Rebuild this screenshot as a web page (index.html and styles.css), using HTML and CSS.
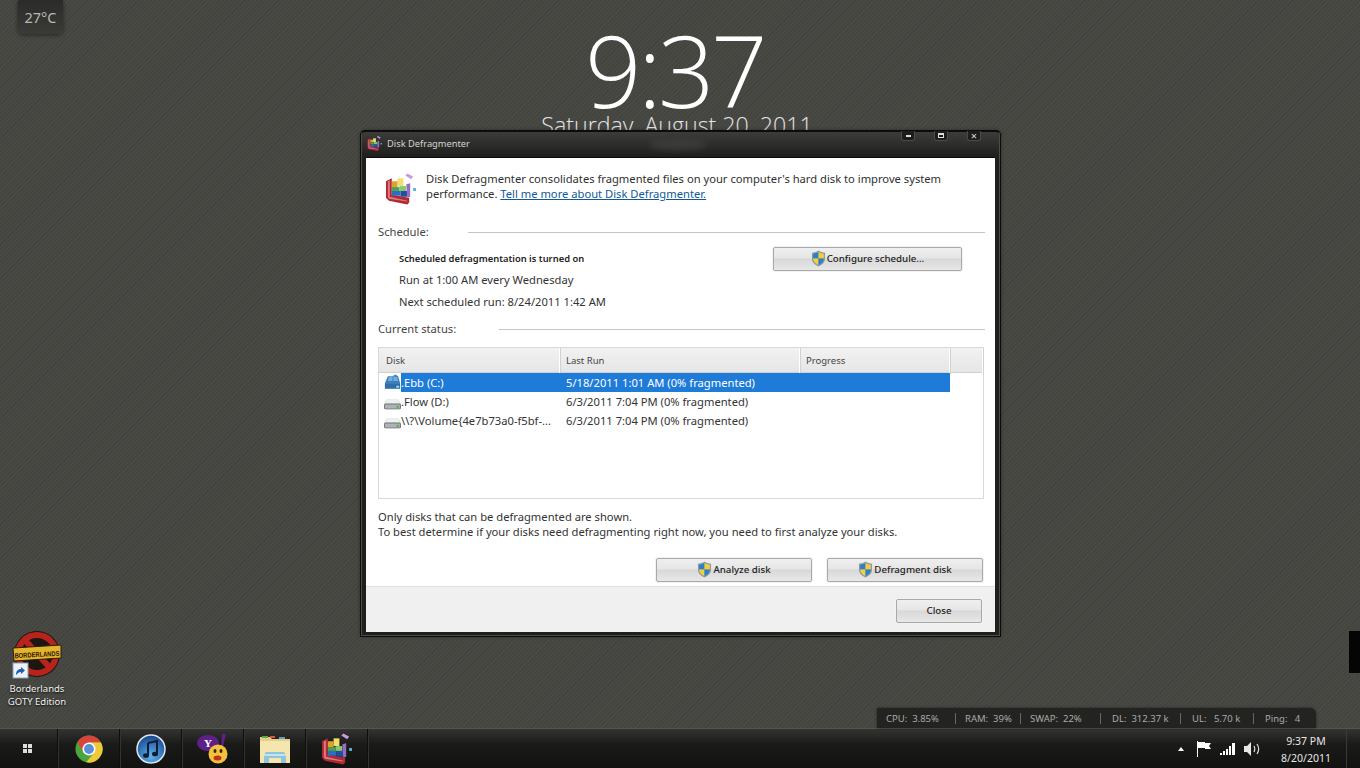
FILE: index.html
```html
<!DOCTYPE html>
<html lang="en">
<head>
<meta charset="utf-8">
<title>Disk Defragmenter</title>
<link rel="stylesheet" href="styles.css">
</head>
<body>
<svg class="defs" width="0" height="0">
  <defs>
    <symbol id="shield" viewBox="0 0 16 18">
      <path d="M8 .5C6 2 3.500 2.800 1 2.800v6C1 13 4 16 8 17.500c4-1.500 7-4.500 7-8.700v-6C12.500 2.800 10 2 8 .5z" fill="#8a9aa8"/>
      <path d="M8 2v7H2.300V3.800C4.300 3.700 6.300 3.100 8 2z" fill="#2f7fc4"/>
      <path d="M8 2c1.700 1.100 3.700 1.700 5.700 1.800V9H8z" fill="#f2cf3c"/>
      <path d="M2.300 9H8v7C4.800 14.800 2.500 12.300 2.300 9z" fill="#f2cf3c"/>
      <path d="M8 9h5.700c-.2 3.300-2.500 5.800-5.700 7z" fill="#2f7fc4"/>
    </symbol>
    <symbol id="defrag" viewBox="0 0 32 32">
      <path d="M1 8l6-3v17l18 3v5l-2 2L4 28l-3-3z" fill="#b02a34"/>
      <path d="M3 8l2-1v17l18 4v1L4 26l-1-2z" fill="#e07a80"/>
      <rect x="7" y="8" width="6" height="6" fill="#e2a02e"/>
      <rect x="13" y="5" width="6" height="8" fill="#ece070"/>
      <rect x="7" y="14" width="8" height="4" fill="#4aa448"/>
      <rect x="15" y="13" width="7" height="5" fill="#86c86c"/>
      <rect x="7" y="18" width="9" height="5" fill="#2f6cc2"/>
      <rect x="16" y="18" width="7" height="6" fill="#234f9e"/>
      <path d="M22 11l4-1v14l-3 1z" fill="#9a6cc0"/>
      <path d="M21 2l2-2 6 3-2 3z" fill="#c99ae0"/>
      <rect x="29" y="15" width="3" height="3" fill="#50b8d8"/>
    </symbol>
    <symbol id="drive" viewBox="0 0 18 14">
      <path d="M3 3h12l3 5v5H0V8z" fill="#cfd2d4"/>
      <path d="M3 3h12l2 5H1z" fill="#eef0f1"/>
      <rect x=".5" y="8" width="17" height="5.500" rx="1.500" fill="#aeb2b5" stroke="#54585a" stroke-width=".8"/>
      <rect x="13" y="10" width="3" height="2" fill="#55b848"/>
    </symbol>
  </defs>
</svg>

<main class="desktop">
  <div class="weather">27°C</div>

  <div class="clock">
    <div class="clock-time">9:37</div>
    <div class="clock-date">Saturday, August 20, 2011</div>
  </div>

  <div class="game-icon">
    <svg class="game-art" width="54" height="51" viewBox="0 0 54 51">
      <circle cx="28" cy="23" r="23" fill="#1d1612"/>
      <circle cx="28" cy="23" r="19" fill="none" stroke="#b8241c" stroke-width="6"/>
      <path d="M15 8l27 30" stroke="#b8241c" stroke-width="6"/>
      <path d="M4 17l48-3v13L5 30z" fill="#e2b52a" stroke="#2a1c0c" stroke-width="1"/>
      <text x="28" y="26" text-anchor="middle" textLength="45" lengthAdjust="spacingAndGlyphs" class="game-banner" transform="rotate(-3 28 24)">BORDERLANDS</text>
      <rect x="4" y="32" width="15" height="15" fill="#eef2f6" stroke="#8aa0b8"/>
      <path d="M7 44c0-4 2-6 5-6v-2l4 3.500-4 3.500v-2c-2 0-3 1-5 3z" fill="#1f5fb8"/>
    </svg>
    <div class="game-label">Borderlands<br>GOTY Edition</div>
  </div>

  <div class="side-tab"></div>

  <div class="stats">
    <span class="stat stat-cpu">CPU:&nbsp; 3.85%</span>
    <span class="stat stat-ram">RAM:&nbsp; 39%</span>
    <span class="stat stat-swap">SWAP:&nbsp; 22%</span>
    <span class="stat stat-dl">DL:&nbsp; 312.37 k</span>
    <span class="stat stat-ul">UL:&nbsp;&nbsp; 5.70 k</span>
    <span class="stat stat-ping">Ping:&nbsp;&nbsp; 4</span>
  </div>

  <section class="window">
    <header class="titlebar">
      <svg class="title-icon" width="15" height="15"><use href="#defrag"/></svg>
      <span class="title-text">Disk Defragmenter</span>
      <span class="title-blur"></span>
      <div class="controls">
        <span class="ctl"><i class="ctl-min"></i></span>
        <span class="ctl"><i class="ctl-max"></i></span>
        <span class="ctl ctl-close">×</span>
      </div>
    </header>
    <div class="client">
      <div class="body">
        <div class="intro">
          <svg class="intro-icon" width="31" height="32"><use href="#defrag"/></svg>
          <p class="intro-text">Disk Defragmenter consolidates fragmented files on your computer's hard disk to improve system performance. <a class="link" href="#">Tell me more about Disk Defragmenter.</a></p>
        </div>

        <div class="group-head group-schedule"><span class="group-label">Schedule:</span><i class="rule rule-schedule"></i></div>
        <div class="schedule">
          <div class="schedule-info">
            <div class="strong">Scheduled defragmentation is turned on</div>
            <div class="sched-line">Run at 1:00 AM every Wednesday</div>
            <div class="sched-line">Next scheduled run: 8/24/2011 1:42 AM</div>
          </div>
          <button class="btn btn-config"><svg width="15" height="17"><use href="#shield"/></svg>Configure schedule...</button>
        </div>

        <div class="group-head"><span class="group-label">Current status:</span><i class="rule rule-status"></i></div>

        <div class="list">
          <div class="list-head">
            <div class="col">Disk</div>
            <div class="col">Last Run</div>
            <div class="col">Progress</div>
            <div class="col"></div>
          </div>
          <div class="row row-selected">
            <div class="cell-disk">
              <svg class="drive-icon" width="17" height="16" viewBox="0 0 18 16"><path d="M1 9l3-7h5l3-2 3 2 2 7v6H1z" fill="#3b80bd"/><path d="M5 3l4-1v5H4zM10 2l4 1 1 4h-5z" fill="#74aede"/><path d="M1 10h16v5H1z" fill="#2f6ea6"/><rect x="13" y="12" width="3" height="2" fill="#a8d8f0"/></svg>
              <span class="disk-name">.Ebb (C:)</span>
            </div>
            <div class="cell-run">5/18/2011 1:01 AM (0% fragmented)</div>
          </div>
          <div class="row">
            <div class="cell-disk"><svg class="drive-icon" width="17" height="14" viewBox="0 0 18 14"><use href="#drive"/></svg><span class="disk-name">.Flow (D:)</span></div>
            <div class="cell-run">6/3/2011 7:04 PM (0% fragmented)</div>
          </div>
          <div class="row">
            <div class="cell-disk"><svg class="drive-icon" width="17" height="14" viewBox="0 0 18 14"><use href="#drive"/></svg><span class="disk-name">\\?\Volume{4e7b73a0-f5bf-...</span></div>
            <div class="cell-run">6/3/2011 7:04 PM (0% fragmented)</div>
          </div>
        </div>

        <p class="note">Only disks that can be defragmented are shown.<br>To best determine if your disks need defragmenting right now, you need to first analyze your disks.</p>

        <div class="actions">
          <button class="btn btn-action"><svg width="15" height="17"><use href="#shield"/></svg>Analyze disk</button>
          <button class="btn btn-action"><svg width="15" height="17"><use href="#shield"/></svg>Defragment disk</button>
        </div>
      </div>
      <footer class="footer"><button class="btn btn-close">Close</button></footer>
    </div>
  </section>
</main>

<nav class="taskbar">
  <div class="task task-start">
    <span class="start-grid"><i></i><i></i><i></i><i></i></span>
  </div>
  <div class="task">
    <svg width="28" height="28" viewBox="0 0 30 30">
      <circle cx="15" cy="15" r="14.500" fill="#4aa53e"/>
      <path d="M15 7.750H27.560A14.500 14.500 0 0 1 12 29.200L21 18.500z" fill="#f0c93a"/>
      <path d="M2.440 7.750A14.500 14.500 0 0 1 27.560 7.750H15L8.900 18.500z" fill="#d9443a"/>
      <circle cx="15" cy="15" r="7" fill="#fff"/>
      <circle cx="15" cy="15" r="5.300" fill="#5b8fd8"/>
    </svg>
  </div>
  <div class="task">
    <svg width="30" height="30" viewBox="0 0 30 30">
      <defs><radialGradient id="it" cx=".5" cy=".75" r=".8"><stop offset="0" stop-color="#5fb4f0"/><stop offset="1" stop-color="#103c84"/></radialGradient></defs>
      <circle cx="15" cy="15" r="14" fill="url(#it)" stroke="#dfe6ee" stroke-width="1.500"/>
      <path d="M12 9l9-2v13" fill="none" stroke="#101c34" stroke-width="2"/>
      <path d="M12 9v12" stroke="#101c34" stroke-width="2"/>
      <ellipse cx="10" cy="21.500" rx="3" ry="2.300" fill="#101c34"/>
      <ellipse cx="19" cy="20" rx="3" ry="2.300" fill="#101c34"/>
    </svg>
  </div>
  <div class="task">
    <svg width="32" height="32" viewBox="0 0 32 32">
      <ellipse cx="11" cy="10" rx="11" ry="8" fill="#5e1f88"/>
      <path d="M25 1h4l-3 13h-2z" fill="#5e1f88"/>
      <text x="11" y="14" text-anchor="middle" class="yahoo-y">Y</text>
      <circle cx="21" cy="21" r="9.500" fill="#f2c23c"/>
      <ellipse cx="18" cy="18" rx="1.500" ry="2" fill="#3a2408"/>
      <ellipse cx="24" cy="18" rx="1.500" ry="2" fill="#3a2408"/>
      <ellipse cx="20.500" cy="25" rx="4" ry="2.500" fill="#c4301c"/>
    </svg>
  </div>
  <div class="task">
    <svg width="32" height="30" viewBox="0 0 32 30">
      <path d="M1 3h10l2 2h18v24H1z" fill="#e6cf84"/>
      <rect x="3" y="2" width="6" height="2" fill="#5ca84c"/>
      <rect x="11" y="2" width="5" height="2" fill="#d85a42"/>
      <rect x="20" y="3" width="6" height="2" fill="#5aa0c8"/>
      <rect x="1" y="7" width="30" height="22" fill="#f4e6ae"/>
      <path d="M5 29v-8l2-3h18l2 3v8h-5v-5H10v5z" fill="#8fc4dc"/>
      <path d="M5 21h22" stroke="#d4eef6" stroke-width="1.500"/>
    </svg>
  </div>
  <div class="task"><svg width="31" height="32"><use href="#defrag"/></svg></div>

  <div class="tray">
    <span class="tray-arrow"></span>
    <svg class="tray-flag" width="16" height="16" viewBox="0 0 16 16">
      <path d="M1 0h1v16H1z" fill="#fff"/><path d="M2 1h7v1h6l-2 3 2 3H9V7H2z" fill="#fff"/>
    </svg>
    <svg class="tray-signal" width="16" height="14" viewBox="0 0 16 14">
      <path d="M0 11h2v2H0zM3 9h2v4H3zM6 7h2v6H6zM9 4h2v9H9zM12 1h3v12h-3z" fill="#fff"/>
    </svg>
    <svg class="tray-sound" width="17" height="16" viewBox="0 0 17 16">
      <path d="M0 5h3l4-4v14l-4-4H0z" fill="#e8e8e8"/>
      <path d="M10 5c1 2 1 4 0 6M13 3c2 3 2 7 0 10" fill="none" stroke="#ddd" stroke-width="1.200"/>
    </svg>
    <div class="tray-clock">9:37 PM<br>8/20/2011</div>
    <span class="show-desktop"></span>
  </div>
</nav>
</body>
</html>
```

FILE: styles.css
```css
* { box-sizing: border-box; }

html, body {
  margin: 0;
  height: 100%;
  overflow: hidden;
}

body {
  display: flex;
  flex-direction: column;
  width: 1360px;
  height: 768px;
  font-family: "Noto Sans", "Open Sans", sans-serif;
  font-size: 11.200px;
  color: #333;
  background: #444440;
}

.defs { position: absolute; }

.desktop {
  position: relative;
  height: 728px;
  background: repeating-linear-gradient(135deg, #4a4a45 0, #4a4a45 1.500px, #434340 1.500px, #434340 3px);
}

/* desktop widgets */
.weather {
  position: absolute;
  left: 18px;
  top: 0;
  width: 45px;
  height: 34px;
  padding-top: 8px;
  text-align: center;
  font-size: 14.500px;
  line-height: 18px;
  color: #b8b8b4;
  background: linear-gradient(#2b2b29, #3a3a37);
  border-radius: 0 0 5px 5px;
  box-shadow: 0 1px 4px rgba(0, 0, 0, .5);
}

.clock {
  position: absolute;
  left: 476px;
  top: 0;
  width: 402px;
  text-align: center;
  color: #fff;
  font-family: "Open Sans", sans-serif;
  font-weight: 300;
}

.clock-time {
  margin-top: 12px;
  padding-right: 5px;
  height: 97px;
  font-size: 99px;
  line-height: 116px;
  letter-spacing: -3.500px;
}

.clock-date {
  font-size: 23.200px;
  line-height: 32px;
  color: #e4e4e4;
}

.game-icon {
  position: absolute;
  left: 0;
  top: 631px;
  width: 74px;
  text-align: center;
}

.game-art {
  display: block;
  margin-left: 9px;
}

.game-banner {
  font: 700 7px "Liberation Sans", sans-serif;
  fill: #2a1406;
}

.game-label {
  font-size: 9.500px;
  line-height: 13px;
  color: #f2f2f2;
  text-shadow: 0 1px 2px #000;
}

.side-tab {
  position: absolute;
  right: 0;
  top: 631px;
  width: 11px;
  height: 42px;
  background: #050505;
}

.stats {
  position: absolute;
  left: 877px;
  top: 708px;
  width: 439px;
  height: 20px;
  display: flex;
  align-items: center;
  font-size: 9.500px;
  color: #aaa;
  background: #232321;
  border-radius: 0 6px 0 0;
  box-shadow: 0 0 3px rgba(0, 0, 0, .5);
}

.stat {
  display: block;
  height: 11px;
  line-height: 11px;
  white-space: nowrap;
  border-left: 1px solid #666;
  padding-left: 11px;
}

.stat-cpu { width: 69px; border: 0; margin-left: 9px; padding-left: 0; }
.stat-ram { width: 65px; padding-left: 9px; }
.stat-swap { width: 80px; padding-left: 9px; }
.stat-dl { width: 80px; }
.stat-ul { width: 73px; }
.stat-ping { width: 50px; }

/* window */
.window {
  position: absolute;
  left: 361px;
  top: 131px;
  width: 639px;
  height: 505px;
  display: flex;
  flex-direction: column;
  padding: 0 4px 3px;
  background: #1f1f1d;
  border: 1px solid #4c4c48;
  border-top-color: #0c0c0c;
  border-radius: 4px 4px 0 0;
  box-shadow: 0 0 0 1px #0c0c0c, 0 0 4px rgba(0, 0, 0, .6);
}

.titlebar {
  position: relative;
  flex: none;
  height: 25px;
  margin: 0 -4px;
  padding: 0 0 2px 5px;
  display: flex;
  align-items: center;
  gap: 5px;
  color: #d4d4d4;
  font-size: 9.300px;
  background: linear-gradient(#3c3c3a, #1e1e1c);
  border-radius: 4px 4px 0 0;
}

.title-icon { flex: none; }

.title-blur {
  position: absolute;
  left: 287px;
  top: 8px;
  width: 58px;
  height: 11px;
  background: rgba(255, 255, 255, .07);
  border-radius: 50%;
  filter: blur(3px);
}

.controls {
  position: absolute;
  right: 18px;
  top: -1px;
  display: flex;
  gap: 19px;
}

.ctl {
  width: 14px;
  height: 10px;
  display: flex;
  align-items: center;
  justify-content: center;
  background: #1d1d1b;
  border: 1px solid #4a4a46;
  border-top: 0;
  border-radius: 0 0 3px 3px;
  color: #ddd;
  font-size: 11px;
  line-height: 9px;
}

.ctl-min { width: 5px; height: 2px; background: #ddd; }
.ctl-max { width: 6px; height: 5px; border: 1.500px solid #ddd; border-top-width: 2px; }

.client {
  flex: 1;
  min-height: 0;
  display: flex;
  flex-direction: column;
  background: #fff;
  border-top: 1px solid #0c0c0c;
}

.body {
  flex: 1;
  padding: 13px 10px 0 12px;
  display: flex;
  flex-direction: column;
}

.intro {
  display: flex;
  align-items: flex-start;
  padding-left: 7px;
  height: 47px;
}

.intro-icon {
  flex: none;
  margin: 2px 10px 0 0;
}

.intro-text {
  margin: 0;
  width: 530px;
  line-height: 15px;
  color: #2f2f2f;
}

.link { color: #0f5a96; }

.group-head {
  display: flex;
  align-items: center;
  height: 16px;
  color: #444;
  white-space: nowrap;
}

.group-label { margin-top: -2px; }

.group-schedule { margin-top: 6px; }

.rule { display: block; height: 1px; margin-left: auto; background: #c4c4c4; }
.rule-schedule { width: 517px; }
.rule-status { width: 486px; }

.schedule {
  display: flex;
  justify-content: space-between;
  align-items: flex-start;
  padding-left: 21px;
  height: 81px;
}

.schedule-info { padding-top: 12px; }

.strong {
  font-size: 9.400px;
  font-weight: 600;
  line-height: 14px;
  color: #222;
}

.sched-line {
  margin-top: 8px;
  height: 14px;
  line-height: 14px;
  color: #333;
}

.strong + .sched-line { margin-top: 7px; }

.btn {
  display: flex;
  align-items: center;
  justify-content: center;
  gap: 1px;
  padding: 0 0 2px;
  font-family: inherit;
  font-size: 9.700px;
  font-weight: 500;
  color: #222;
  background: linear-gradient(#efefef 0, #e6e6e6 45%, #d8d8d8 50%, #e8e8e8 100%);
  border: 1px solid #a9a9a9;
  border-radius: 2px;
  box-shadow: 0 0 0 1px #f2f2f2;
}

.btn-config {
  width: 189px;
  height: 24px;
  margin: 7px 23px 0 0;
}

.list {
  flex: none;
  width: 606px;
  height: 152px;
  margin-top: 10px;
  border: 1px solid #d9d9d9;
}

.list-head {
  height: 25px;
  display: grid;
  grid-template-columns: 181px 240px 150px 1fr;
  background: linear-gradient(#f2f2f2, #e6e6e6);
  border-bottom: 1px solid #d0d0d0;
}

.col {
  padding-left: 6px;
  font-size: 9.500px;
  line-height: 26px;
  color: #444;
  border-right: 1px solid #fff;
  box-shadow: 1px 0 0 #d2d2d2;
}

.col:first-child { padding-left: 7px; }

.row {
  display: grid;
  grid-template-columns: 181px 390px;
  height: 19px;
  line-height: 19px;
  color: #333;
}

.cell-disk {
  display: flex;
  align-items: center;
  padding-left: 5px;
  white-space: nowrap;
  overflow: hidden;
}

.drive-icon {
  flex: none;
  margin-top: 2px;
}

.cell-run { padding-left: 6px; }

.row-selected { color: #fff; }
.row-selected .cell-run { background: #1e7bd8; }
.row-selected .disk-name {
  flex: 1;
  background: #1e7bd8;
}
.row-selected .drive-icon { margin-top: -2px; }

.note {
  margin: 10px 0 0;
  line-height: 15px;
  color: #333;
}

.actions {
  display: flex;
  justify-content: flex-end;
  gap: 15px;
  margin: 19px 2px 0 0;
}

.btn-action { width: 156px; height: 24px; }

.footer {
  flex: none;
  height: 46px;
  padding: 12px 13px 0 0;
  display: flex;
  justify-content: flex-end;
  background: #f0f0f0;
  border-top: 1px solid #dfdfdf;
}

.btn-close { width: 86px; height: 24px; }

/* taskbar */
.taskbar {
  flex: none;
  height: 40px;
  display: flex;
  align-items: stretch;
  background: linear-gradient(#333331, #1a1a19 40%, #121211);
  border-top: 1px solid #55554f;
}

.task {
  width: 62px;
  display: flex;
  align-items: center;
  justify-content: center;
  border-right: 1px solid #0e0e0e;
  box-shadow: 1px 0 0 #333;
}

.task-start { width: 58px; padding-right: 2px; }

.start-grid {
  display: grid;
  grid-template-columns: 4px 4px;
  gap: 1px;
}

.start-grid i { width: 4px; height: 4px; background: #ddd; }

.yahoo-y {
  font: 700 11px "Liberation Serif", serif;
  fill: #fff;
}

.tray {
  margin-left: auto;
  display: flex;
  align-items: center;
}

.tray-arrow {
  width: 0;
  height: 0;
  margin-right: 12px;
  border: 3px solid transparent;
  border-bottom: 4px solid #fff;
  border-top: 0;
}

.tray-flag { margin-right: 8px; }
.tray-signal { margin-right: 8px; }
.tray-sound { margin-right: 20px; }

.tray-clock {
  width: 50px;
  padding-top: 2px;
  text-align: center;
  font-size: 10.500px;
  line-height: 17px;
  color: #e6e6e6;
  white-space: nowrap;
}

.show-desktop {
  width: 14px;
  height: 100%;
  margin-left: 15px;
  border-left: 1px solid #3a3a38;
}
```
